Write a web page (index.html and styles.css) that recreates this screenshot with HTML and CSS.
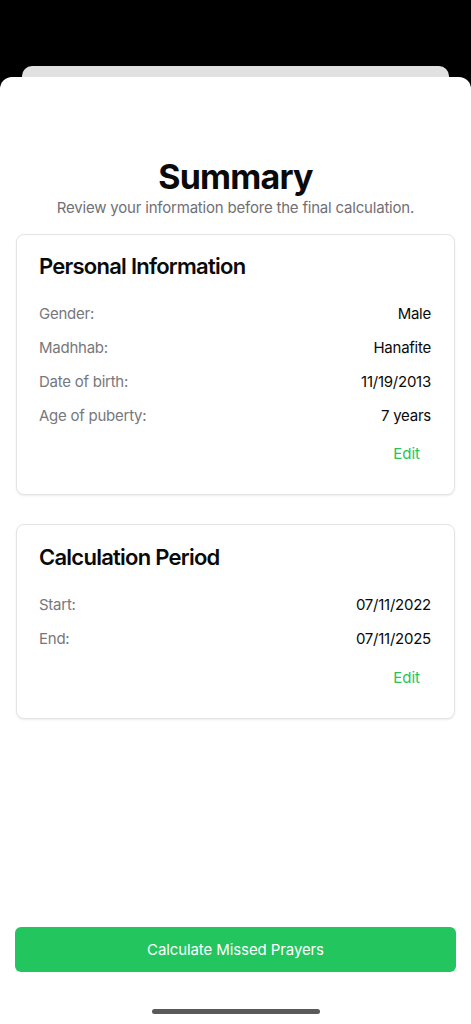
FILE: index.html
```html
<!DOCTYPE html>
<html>
<head>
<meta charset="utf-8">
<link rel="stylesheet" href="styles.css">
</head>
<body>
<div class="screen">
  <div class="back-sheet"></div>
  <div class="sheet">
    <header class="head">
      <h1 class="title">Summary</h1>
      <p class="subtitle">Review your information before the final calculation.</p>
    </header>
    <section class="card">
      <h2 class="card-title">Personal Information</h2>
      <div class="rows">
        <div class="row"><span class="label">Gender:</span><span class="value">Male</span></div>
        <div class="row"><span class="label">Madhhab:</span><span class="value">Hanafite</span></div>
        <div class="row"><span class="label">Date of birth:</span><span class="value">11/19/2013</span></div>
        <div class="row"><span class="label">Age of puberty:</span><span class="value">7 years</span></div>
      </div>
      <div class="edit-wrap"><span class="edit">Edit</span></div>
    </section>
    <section class="card card-second">
      <h2 class="card-title">Calculation Period</h2>
      <div class="rows">
        <div class="row"><span class="label">Start:</span><span class="value">07/11/2022</span></div>
        <div class="row"><span class="label">End:</span><span class="value">07/11/2025</span></div>
      </div>
      <div class="edit-wrap edit-wrap-second"><span class="edit">Edit</span></div>
    </section>
    <div class="spacer"></div>
    <button class="cta">Calculate Missed Prayers</button>
    <div class="home-wrap"><div class="home"></div></div>
  </div>
</div>
</body>
</html>
```

FILE: styles.css
```css
* { box-sizing: border-box; }
html, body { margin: 0; padding: 0; background: #000; }
body { font-family: Inter, "Noto Sans", sans-serif; color: #0a0a0a; }
.screen {
  width: 471px;
  height: 1024px;
  background: #000;
  padding-top: 66px;
  display: flex;
  flex-direction: column;
  overflow: hidden;
}
.back-sheet {
  height: 11px;
  margin: 0 22px;
  background: #e1e1e1;
  border-radius: 10px 10px 0 0;
  flex: none;
}
.sheet {
  flex: 1;
  background: #fff;
  border-radius: 12px 12px 0 0;
  display: flex;
  flex-direction: column;
  padding: 0 15px;
}
.head {
  text-align: center;
  padding-top: 79px;
}
.title {
  margin: 0;
  font-size: 34px;
  font-weight: 700;
  line-height: 42px;
  letter-spacing: -0.8px;
  color: #0a0a0a;
}
.subtitle {
  margin: 0;
  font-size: 15px;
  line-height: 20px;
  color: #707076;
  letter-spacing: -0.2px;
}
.card {
  margin: 16px 1px 0;
  border: 1px solid #e4e4e6;
  border-radius: 8px;
  background: #fff;
  box-shadow: 0 1px 2px rgba(0,0,0,0.08);
  padding: 17px 23px 22px 22px;
}
.card-second { margin-top: 29px; padding-top: 18px; }
.card-title {
  margin: 0;
  font-size: 22px;
  font-weight: 600;
  line-height: 28px;
  letter-spacing: -0.75px;
  color: #0a0a0a;
}
.rows {
  margin-top: 16px;
  display: flex;
  flex-direction: column;
}
.row {
  display: flex;
  justify-content: space-between;
  align-items: center;
  height: 34px;
  font-size: 15px;
  letter-spacing: -0.25px;
}
.label { color: #77777c; }
.value { color: #0a0a0a; }
.edit-wrap {
  display: flex;
  justify-content: flex-end;
  margin-top: 4px;
}
.edit-wrap-second { margin-top: 5px; }
.edit {
  font-size: 15px;
  color: #22c55e;
  padding: 8px 11px;
  line-height: 20px;
}
.spacer { flex: 1; }
.cta {
  display: block;
  width: 100%;
  height: 45px;
  background: #22c55e;
  color: #fff;
  border: none;
  border-radius: 6px;
  font-family: Inter, "Noto Sans", sans-serif;
  font-size: 15px;
  letter-spacing: -0.1px;
  flex: none;
}
.home-wrap {
  height: 52px;
  display: flex;
  justify-content: center;
  padding-top: 37px;
  flex: none;
}
.home {
  width: 168px;
  height: 5px;
  border-radius: 3px;
  background: #5a5a5a;
}
```
